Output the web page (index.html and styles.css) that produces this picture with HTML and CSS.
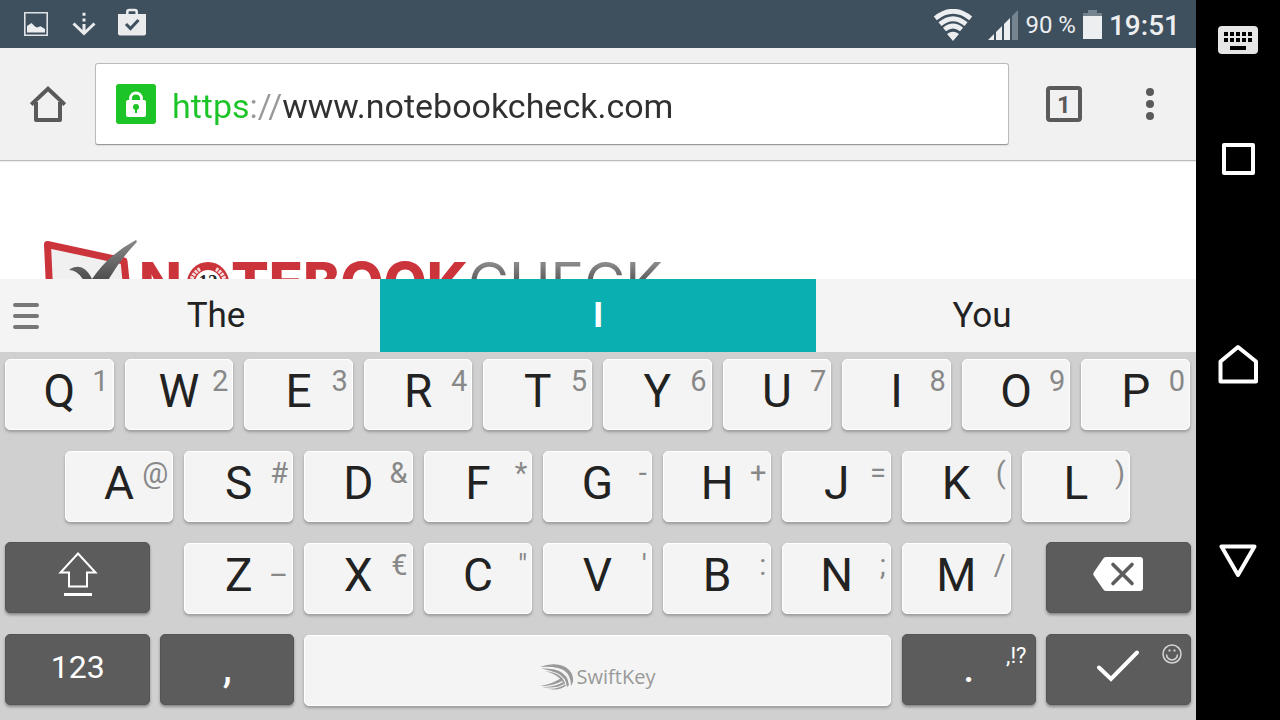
FILE: index.html
```html
<!DOCTYPE html>
<html lang="en">
<head>
<meta charset="utf-8">
<meta name="viewport" content="width=device-width, initial-scale=1">
<title>Notebookcheck</title>
<link rel="stylesheet" href="styles.css">
</head>
<body>
<div class="device">
  <div class="screen">
    <header class="status">
      <div class="status-group notices">
        <svg width="24" height="24" viewBox="0 0 24 24" role="img" aria-label="Screenshot saved"><path fill="none" stroke="#dfe3e6" stroke-width="1.6" d="M.8.8h22.4v22.4H.8z"/><path fill="#eceef0" d="M3 20.500V14l4.500-3 3.500 3.500 2 1 3.500-1.300 4.500 2.800v3.500z"/></svg>
        <svg width="24" height="24" viewBox="0 0 24 24" role="img" aria-label="Download"><path fill="#e9ebed" d="M10.500.8h3v3h-3zM10.500 6.500h3v3h-3z"/><path fill="none" stroke="#e9ebed" stroke-width="3" d="M12 12v9M1.500 11.500 12 21.500l10.500-10"/></svg>
        <svg width="28" height="28" viewBox="0 0 28 28" role="img" aria-label="App update"><path fill="#e9ebed" d="M0 6h28v19.500a2 2 0 0 1-2 2H2a2 2 0 0 1-2-2z"/><path fill="none" stroke="#e9ebed" stroke-width="2.600" d="M9.300 7V4q0-2 2-2h5.400q2 0 2 2v3"/><path fill="none" stroke="#3e4f5e" stroke-width="3" d="m8 16 4.500 4.500 8-8.500"/></svg>
      </div>
      <div class="status-group">
        <svg class="wifi" width="40" height="32" viewBox="0 0 40 32" role="img" aria-label="Wi-Fi"><g fill="none" stroke="#eceef0" stroke-width="4.800"><path d="M2.300 9.300Q20-4.800 37.700 9.300"/><path d="M7 15.200Q20 4.300 33 15.200"/><path d="M11.500 20.500Q20 13.500 28.500 20.500"/></g><path fill="#eceef0" d="m20 32-6-7q6-4.500 12 0z"/></svg>
        <svg class="signal" width="30" height="30" viewBox="0 0 30 30" role="img" aria-label="Mobile signal"><path fill="#eceef0" d="M0 30 6 24v6zM8 30v-8l6-6v14zM16 30V14l6-6v22z"/><path fill="#76848f" d="M24 30V6l6-6v30z"/></svg>
        <span class="percent">90 %</span>
        <svg width="19" height="29" viewBox="0 0 19 29" role="img" aria-label="Battery"><path fill="#76848f" d="M5 0h9v3h5v3H0V3h5z"/><path fill="#eceef0" d="M0 6h19v23H0z"/></svg>
        <time class="clock">19:51</time>
      </div>
    </header>

    <div class="toolbar">
      <button class="tool home" aria-label="Home page"><svg width="36" height="36" viewBox="0 0 36 36"><path fill="none" stroke="#5a5a5a" stroke-width="4" stroke-linejoin="round" d="M6 16v18h24V16"/><path fill="none" stroke="#5a5a5a" stroke-width="4" d="M1.200 18.500 18 2.800l16.800 15.700"/></svg></button>
      <div class="address">
        <svg width="40" height="40" viewBox="0 0 40 40" role="img" aria-label="Secure connection"><rect width="40" height="40" rx="3" fill="#1cc427"/><rect x="10" y="16" width="20" height="17" rx="2" fill="#fff"/><path fill="none" stroke="#fff" stroke-width="2.800" d="M14.500 17v-2.500a5.500 5.500 0 0 1 11 0V17"/><circle cx="20" cy="23" r="3" fill="#1cc427"/><path fill="#1cc427" d="M19 24h2v5h-2z"/></svg>
        <input class="url" type="text" aria-label="Address" value="https://www.notebookcheck.com" spellcheck="false">
      </div>
      <button class="tool tabs" aria-label="Open tabs"><span class="tab-count">1</span></button>
      <button class="tool more" aria-label="Menu"><svg width="8" height="32" viewBox="0 0 8 32" fill="#5a5a5a"><circle cx="4" cy="4" r="4"/><circle cx="4" cy="16" r="4"/><circle cx="4" cy="28" r="4"/></svg></button>
    </div>

    <main class="page">
      <a class="brand" href="#" aria-label="Notebookcheck">
        <svg class="mark" width="96" height="80" viewBox="0 0 96 80"><defs><linearGradient id="tick" x1="0" y1="0" x2="0" y2="1"><stop offset="0" stop-color="#8a8a8a"/><stop offset="1" stop-color="#333"/></linearGradient></defs><path fill="#f0f0f0" stroke="#cb343a" stroke-width="7" stroke-linejoin="round" d="M4.500 4.500 81 21l6 59H8z"/><path fill="url(#tick)" d="M26 30c8-6 17-4 23 9Q66 14 93 0q2 2-1 4Q72 25 56 57l-9-2Q39 30 26 30z"/></svg>
        <span class="wordmark"><span class="bold">N</span><svg class="badge" width="42" height="42" viewBox="0 0 42 42"><circle cx="21" cy="21" r="21" fill="#cb343a"/><circle cx="21" cy="21" r="13" fill="#fff"/><g fill="none" stroke="#f5dede" stroke-width="4" stroke-dasharray="2.500 1"><path d="M13 7A17 17 0 0 0 4 21M29 7a17 17 0 0 1 9 14"/></g><text x="21" y="26" text-anchor="middle" class="badge-text">12</text></svg><span class="bold">TEBOOK</span><span class="thin">CHECK</span></span>
      </a>
    </main>

    <div class="suggestions">
      <button class="menu" aria-label="Keyboard menu"><svg width="26" height="26" viewBox="0 0 26 26"><path stroke="#777" stroke-width="4" stroke-linecap="round" d="M2 2h22M2 13h22M2 24h22"/></svg></button>
      <button class="word first">The</button>
      <button class="word active">I</button>
      <button class="word last">You</button>
    </div>

    <div class="keyboard">
      <div class="row row-top">
        <button class="key">Q<span class="hint">1</span></button>
        <button class="key">W<span class="hint">2</span></button>
        <button class="key">E<span class="hint">3</span></button>
        <button class="key">R<span class="hint">4</span></button>
        <button class="key">T<span class="hint">5</span></button>
        <button class="key">Y<span class="hint">6</span></button>
        <button class="key">U<span class="hint">7</span></button>
        <button class="key">I<span class="hint">8</span></button>
        <button class="key">O<span class="hint">9</span></button>
        <button class="key">P<span class="hint">0</span></button>
      </div>
      <div class="row row-home">
        <button class="key key-a">A<span class="hint">@</span></button>
        <button class="key">S<span class="hint">#</span></button>
        <button class="key">D<span class="hint">&amp;</span></button>
        <button class="key">F<span class="hint">*</span></button>
        <button class="key">G<span class="hint">-</span></button>
        <button class="key">H<span class="hint">+</span></button>
        <button class="key">J<span class="hint">=</span></button>
        <button class="key">K<span class="hint">(</span></button>
        <button class="key">L<span class="hint">)</span></button>
      </div>
      <div class="row row-lower">
        <button class="key dark" aria-label="Shift"><svg width="42" height="46" viewBox="0 0 42 46"><path fill="none" stroke="#fff" stroke-width="2" d="M21 2.500 38.500 21.500H30V35.500H12V21.500H3.500z"/><path fill="#fff" d="M7 42h28v3H7z"/></svg></button>
        <button class="key key-z">Z<span class="hint low">–</span></button>
        <button class="key">X<span class="hint">€</span></button>
        <button class="key">C<span class="hint">"</span></button>
        <button class="key">V<span class="hint">'</span></button>
        <button class="key">B<span class="hint">:</span></button>
        <button class="key">N<span class="hint">;</span></button>
        <button class="key">M<span class="hint">/</span></button>
        <button class="key dark key-last" aria-label="Backspace"><svg width="50" height="34" viewBox="0 0 50 34"><path fill="#fff" d="M13 0h34a3 3 0 0 1 3 3v28a3 3 0 0 1-3 3H13q-2 0-3-2L1 19q-1.500-2 0-4l9-13q1-2 3-2z"/><path stroke="#5c5c5c" stroke-width="3.600" stroke-linecap="round" d="m20 7.500 19 19m0-19-19 19"/></svg></button>
      </div>
      <div class="row row-bottom">
        <button class="key dark numbers">123</button>
        <button class="key dark">,</button>
        <button class="key space" aria-label="Space"><svg width="34" height="26" viewBox="0 0 34 26" fill="#999"><path d="M0 3Q10-1 20 1q14 4 13 17-1 2-2 4Q31 7 18 4 10 2 0 3z"/><path d="M1 4.500Q13 4 19 7q9 4 10 14l-2 2Q26 13 17 9 10 6 1 4.500z"/><path d="M5 7q10 1 15 5 5 4 5 9l-3-4Q17 10 5 7z"/><path d="M0 22q15-3 21-8l1 3Q14 22 0 22z"/><path d="M2 23q14 0 21-5l1 2q-8 5-22 3z"/><path d="M7 24.500q11 1 18-4l1 1q-7 6-19 3z"/></svg><span class="maker">SwiftKey</span></button>
        <button class="key dark">.<span class="hint marks">,!?</span></button>
        <button class="key dark" aria-label="Done"><svg width="42" height="32" viewBox="0 0 42 32"><path fill="none" stroke="#fff" stroke-width="4" stroke-linecap="round" d="M2 17.500 14 29 40 2.500"/></svg><svg class="smile" width="20" height="20" viewBox="0 0 20 20" fill="none" stroke="#d6d6d6" stroke-width="1.500"><circle cx="10" cy="10" r="9"/><path d="M4.500 10.500a5.500 5.500 0 0 0 11 0"/><path stroke-width="2" d="M6.500 6.500h2M11.500 6.500h2"/></svg></button>
      </div>
    </div>
  </div>

  <aside class="sidebar">
    <button class="ime" aria-label="Switch keyboard"><svg width="40" height="28" viewBox="0 0 40 28"><rect width="40" height="28" rx="4" fill="#e6e6e6"/><path stroke="#000" stroke-width="4" stroke-dasharray="4 2" d="M6 8h28M6 14h28"/><path fill="#000" d="M12 20h16v4H12z"/></svg></button>
    <nav class="nav" aria-label="System">
      <button aria-label="Recent apps"><svg width="33" height="32" viewBox="0 0 33 32"><path fill="none" stroke="#fff" stroke-width="4" stroke-linejoin="round" d="M2 2h29v28H2z"/></svg></button>
      <button class="nav-home" aria-label="Home"><svg width="40" height="40" viewBox="0 0 40 40"><path fill="none" stroke="#fff" stroke-width="4" stroke-linejoin="round" d="M20 3 38 17.500V37.500H2.500V17.500z"/></svg></button>
      <button aria-label="Back"><svg width="38" height="34" viewBox="0 0 38 34"><path fill="none" stroke="#fff" stroke-width="4" stroke-linejoin="round" d="M2.500 2.500h33L19 31z"/></svg></button>
    </nav>
  </aside>
</div>
</body>
</html>
```

FILE: styles.css
```css
* {
  box-sizing: border-box;
}

body {
  margin: 0;
  font-family: Roboto, "Liberation Sans", sans-serif;
  color: #222;
}

button {
  margin: 0;
  padding: 0;
  border: 0;
  background: none;
  color: inherit;
  font: inherit;
}

svg {
  display: block;
  flex: none;
}

.device {
  display: flex;
  height: 100vh;
  overflow: hidden;
}

.screen {
  flex: 1;
  min-width: 0;
  display: flex;
  flex-direction: column;
  background: #fff;
}

/* Status bar */
.status {
  flex: none;
  height: 48px;
  padding: 0 16px 0 24px;
  display: flex;
  align-items: center;
  justify-content: space-between;
  background: #3e4f5e;
  color: #eceef0;
}

.status-group {
  display: flex;
  align-items: center;
  gap: 7px;
}

.notices {
  gap: 24px;
}

.notices svg:last-child {
  margin: 0 0 4px -2px;
}

.wifi,
.signal {
  margin-top: 2px;
}

.signal {
  margin-left: 8px;
}

.percent {
  font-size: 24px;
  padding-top: 2px;
}

.clock {
  font-size: 28px;
  font-weight: 500;
  padding-top: 2px;
}

/* Browser toolbar */
.toolbar {
  flex: none;
  display: flex;
  align-items: center;
  padding: 15px 0;
  background: #f1f1f1;
  border-bottom: 1px solid #bbb;
  box-shadow: 0 1px 1px #eee;
}

.tool {
  flex: none;
  display: flex;
  align-items: center;
  justify-content: center;
}

.home {
  width: 95px;
}

.tabs {
  width: 110px;
}

.more {
  width: 62px;
  margin-right: 15px;
}

.address {
  flex: 1;
  min-width: 0;
  height: 82px;
  padding: 0 20px;
  display: flex;
  align-items: center;
  gap: 16px;
  background: #fff;
  border: 1px solid #bbb;
  border-bottom-color: #999;
  border-radius: 3px;
  box-shadow: 0 1px 1px #ddd;
}

/* Scheme, separator and host each take their own colour */
.url {
  flex: 1;
  min-width: 0;
  height: 48px;
  padding: 4px 0 0;
  border: 0;
  outline: 0;
  font: 34px Roboto, "Liberation Sans", sans-serif;
  color: transparent;
  background: linear-gradient(90deg, #1cc427 78px, #999 78px 110px, #303030 110px);
  background-clip: text;
  -webkit-background-clip: text;
}

.tab-count {
  width: 36px;
  height: 36px;
  border: 4px solid #5a5a5a;
  border-radius: 4px;
  color: #5a5a5a;
  font-size: 24px;
  font-weight: 700;
  line-height: 30px;
}

/* Web page */
.page {
  flex: 1;
  min-height: 0;
  overflow: hidden;
  padding: 79px 43px 0;
}

.brand {
  display: flex;
  align-items: flex-start;
  text-decoration: none;
}

.wordmark {
  display: flex;
  align-items: flex-start;
  padding-top: 15px;
  font-family: Inter, sans-serif;
  font-size: 56px;
  line-height: 56px;
}

.bold {
  font-weight: 800;
  color: #cb343a;
}

.thin {
  font-weight: 400;
  color: transparent;
  background: linear-gradient(#8a8a8a 8px, #555 28px);
  background-clip: text;
  -webkit-background-clip: text;
}

.badge {
  margin: 7px 2px 0 5px;
}

.badge-text {
  font: 700 19px "Liberation Serif", serif;
  fill: #222;
}

/* Word suggestions */
.suggestions {
  flex: none;
  height: 73px;
  display: flex;
  background: #f4f4f4;
  font-size: 35px;
}

.menu {
  width: 52px;
  padding-left: 13px;
}

.first {
  flex: 328;
}

.active {
  flex: 436;
  background: #09afb1;
  color: #fff;
  font-weight: 700;
}

.last {
  flex: 332;
  margin-right: 48px;
}

/* Keyboard */
.keyboard {
  flex: none;
  background: #d0d0d0;
}

.row {
  display: grid;
  height: 92px;
}

.row-top {
  grid-template-columns: repeat(10, minmax(0, 10fr));
}

.row-home {
  grid-template-columns: minmax(0, 5fr) repeat(9, minmax(0, 10fr)) minmax(0, 5fr);
}

.row-lower {
  grid-template-columns: minmax(0, 13fr) minmax(0, 2fr) repeat(7, minmax(0, 10fr)) minmax(0, 2fr) minmax(0, 13fr);
}

.row-bottom {
  grid-template-columns: minmax(0, 13fr) minmax(0, 12fr) minmax(0, 50fr) minmax(0, 12fr) minmax(0, 13fr);
}

.key-a {
  grid-column: 2;
}

.key-z {
  grid-column: 3;
}

.key-last {
  grid-column: 11;
}

.key {
  position: relative;
  margin: 7px 6px 14px 5px;
  padding-bottom: 8px;
  display: flex;
  align-items: center;
  justify-content: center;
  background: #f4f4f4;
  border: 1px solid #fff;
  border-radius: 5px;
  box-shadow: 0 2px 3px #999;
  font-size: 46px;
}

.hint {
  position: absolute;
  top: 4px;
  right: 4px;
  font-size: 29px;
  line-height: 34px;
  color: #888;
}

.low {
  top: 14px;
}

.dark {
  margin: 6px 5px 15px;
  background: #5c5c5c;
  border-color: #555;
  box-shadow: 0 2px 3px #888;
  color: #fff;
}

.numbers {
  font-size: 32px;
  padding-bottom: 6px;
}

.marks {
  right: 8px;
  font-size: 22px;
  color: #fff;
}

.smile {
  position: absolute;
  top: 9px;
  right: 8px;
}

.space {
  align-items: flex-end;
  gap: 3px;
  padding-bottom: 15px;
}

.maker {
  font-family: "Open Sans", "Noto Sans", sans-serif;
  font-size: 20px;
  line-height: 26px;
  color: #999;
}

/* System navigation */
.sidebar {
  flex: none;
  width: 84px;
  display: flex;
  flex-direction: column;
  background: #000;
}

.ime {
  height: 60px;
  padding-top: 20px;
  display: flex;
  align-items: center;
  justify-content: center;
}

.nav {
  flex: 1;
  padding-bottom: 60px;
  display: flex;
  flex-direction: column;
}

.nav button {
  flex: 1;
  display: flex;
  align-items: center;
  justify-content: center;
}

.nav .nav-home {
  padding-top: 8px;
}
```
